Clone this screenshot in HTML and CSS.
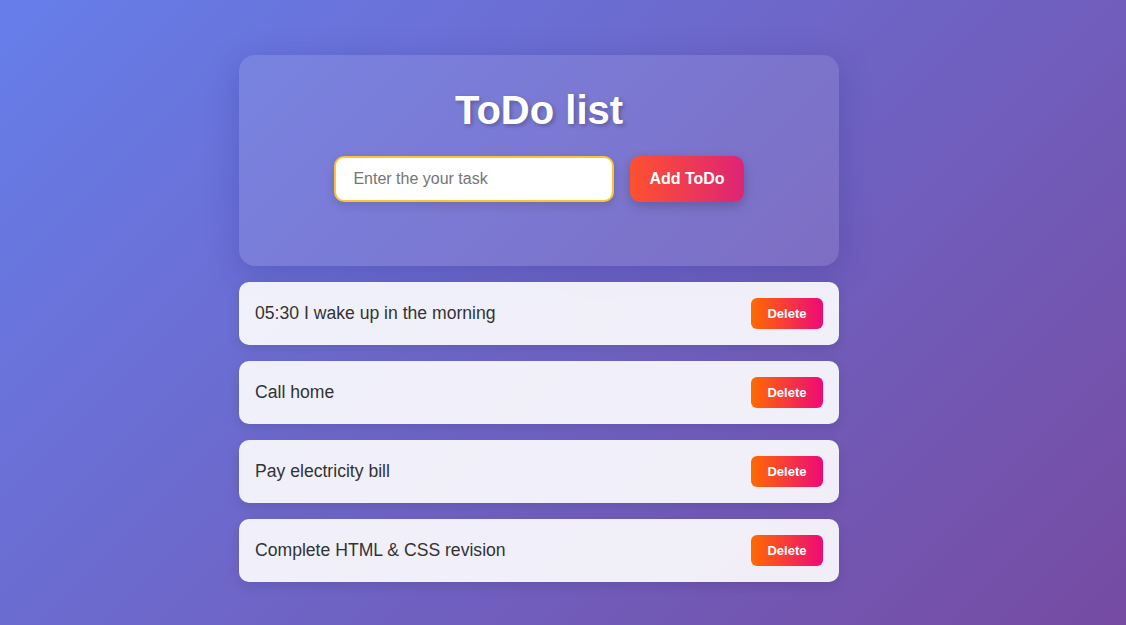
FILE: index.html
```html
<!DOCTYPE html>
<html lang="en">
<head>
<meta charset="UTF-8">
<title>ToDo list</title>
<link rel="stylesheet" href="styles.css">
</head>
<body>
<main class="app">
  <section class="panel">
    <h1 class="title">ToDo list</h1>
    <form class="entry">
      <input class="entry-input" type="text" placeholder="Enter the your task">
      <button class="entry-btn" type="button">Add ToDo</button>
    </form>
  </section>
  <ul class="list">
    <li class="item"><span class="item-text">05:30 I wake up in the morning</span><button class="del-btn" type="button">Delete</button></li>
    <li class="item"><span class="item-text">Call home</span><button class="del-btn" type="button">Delete</button></li>
    <li class="item"><span class="item-text">Pay electricity bill</span><button class="del-btn" type="button">Delete</button></li>
    <li class="item"><span class="item-text">Complete HTML &amp; CSS revision</span><button class="del-btn" type="button">Delete</button></li>
  </ul>
</main>
</body>
</html>
```
FILE: styles.css
```css
* { box-sizing: border-box; }
html, body { margin: 0; height: 100%; }
body {
  font-family: "Liberation Sans", Arial, sans-serif;
  background: linear-gradient(135deg, #667eea 0%, #764ba2 100%);
  min-height: 100vh;
  padding: 55px 48px 0 0;
  overflow: hidden;
}
.app {
  width: 600px;
  margin: 0 auto;
}
.panel {
  background: rgba(255, 255, 255, 0.1);
  border-radius: 16px;
  padding: 32px 30px 64px;
  box-shadow: 0 8px 32px rgba(31, 38, 135, 0.25);
  text-align: center;
}
.title {
  margin: 0 0 23px;
  font-size: 40px;
  font-weight: bold;
  color: #fff;
  text-shadow: 2px 2px 4px rgba(0, 0, 0, 0.25);
  line-height: 46px;
}
.entry {
  display: flex;
  justify-content: center;
  gap: 16px;
  margin: 0;
}
.entry-input {
  width: 280px;
  height: 46px;
  padding: 0 17px;
  border: 2px solid #fbc531;
  border-radius: 10px;
  font-family: inherit;
  font-size: 16px;
  color: #333;
  background: #fff;
  outline: none;
  box-shadow: 0 4px 10px rgba(0, 0, 0, 0.12);
}
.entry-input::placeholder { color: #757575; }
.entry-btn {
  height: 46px;
  padding: 0 19px;
  border: none;
  border-radius: 10px;
  font-family: inherit;
  font-size: 16px;
  font-weight: bold;
  color: #fff;
  background: linear-gradient(90deg, #ff512f, #dd2476);
  box-shadow: 0 4px 12px rgba(0, 0, 0, 0.2);
  cursor: pointer;
}
.list {
  list-style: none;
  margin: 16px 0 0;
  padding: 0;
  display: flex;
  flex-direction: column;
  gap: 16px;
}
.item {
  display: flex;
  align-items: center;
  justify-content: space-between;
  height: 63px;
  padding: 0 16px;
  background: rgba(255, 255, 255, 0.9);
  border-radius: 10px;
  box-shadow: 0 4px 12px rgba(0, 0, 0, 0.1);
}
.item-text {
  font-size: 17.6px;
  color: #333;
}
.del-btn {
  width: 72px;
  height: 31px;
  padding: 0;
  border: none;
  border-radius: 6px;
  font-family: inherit;
  font-size: 13px;
  font-weight: bold;
  color: #fff;
  background: linear-gradient(90deg, #ff6a00, #ee0979);
  cursor: pointer;
}
```
